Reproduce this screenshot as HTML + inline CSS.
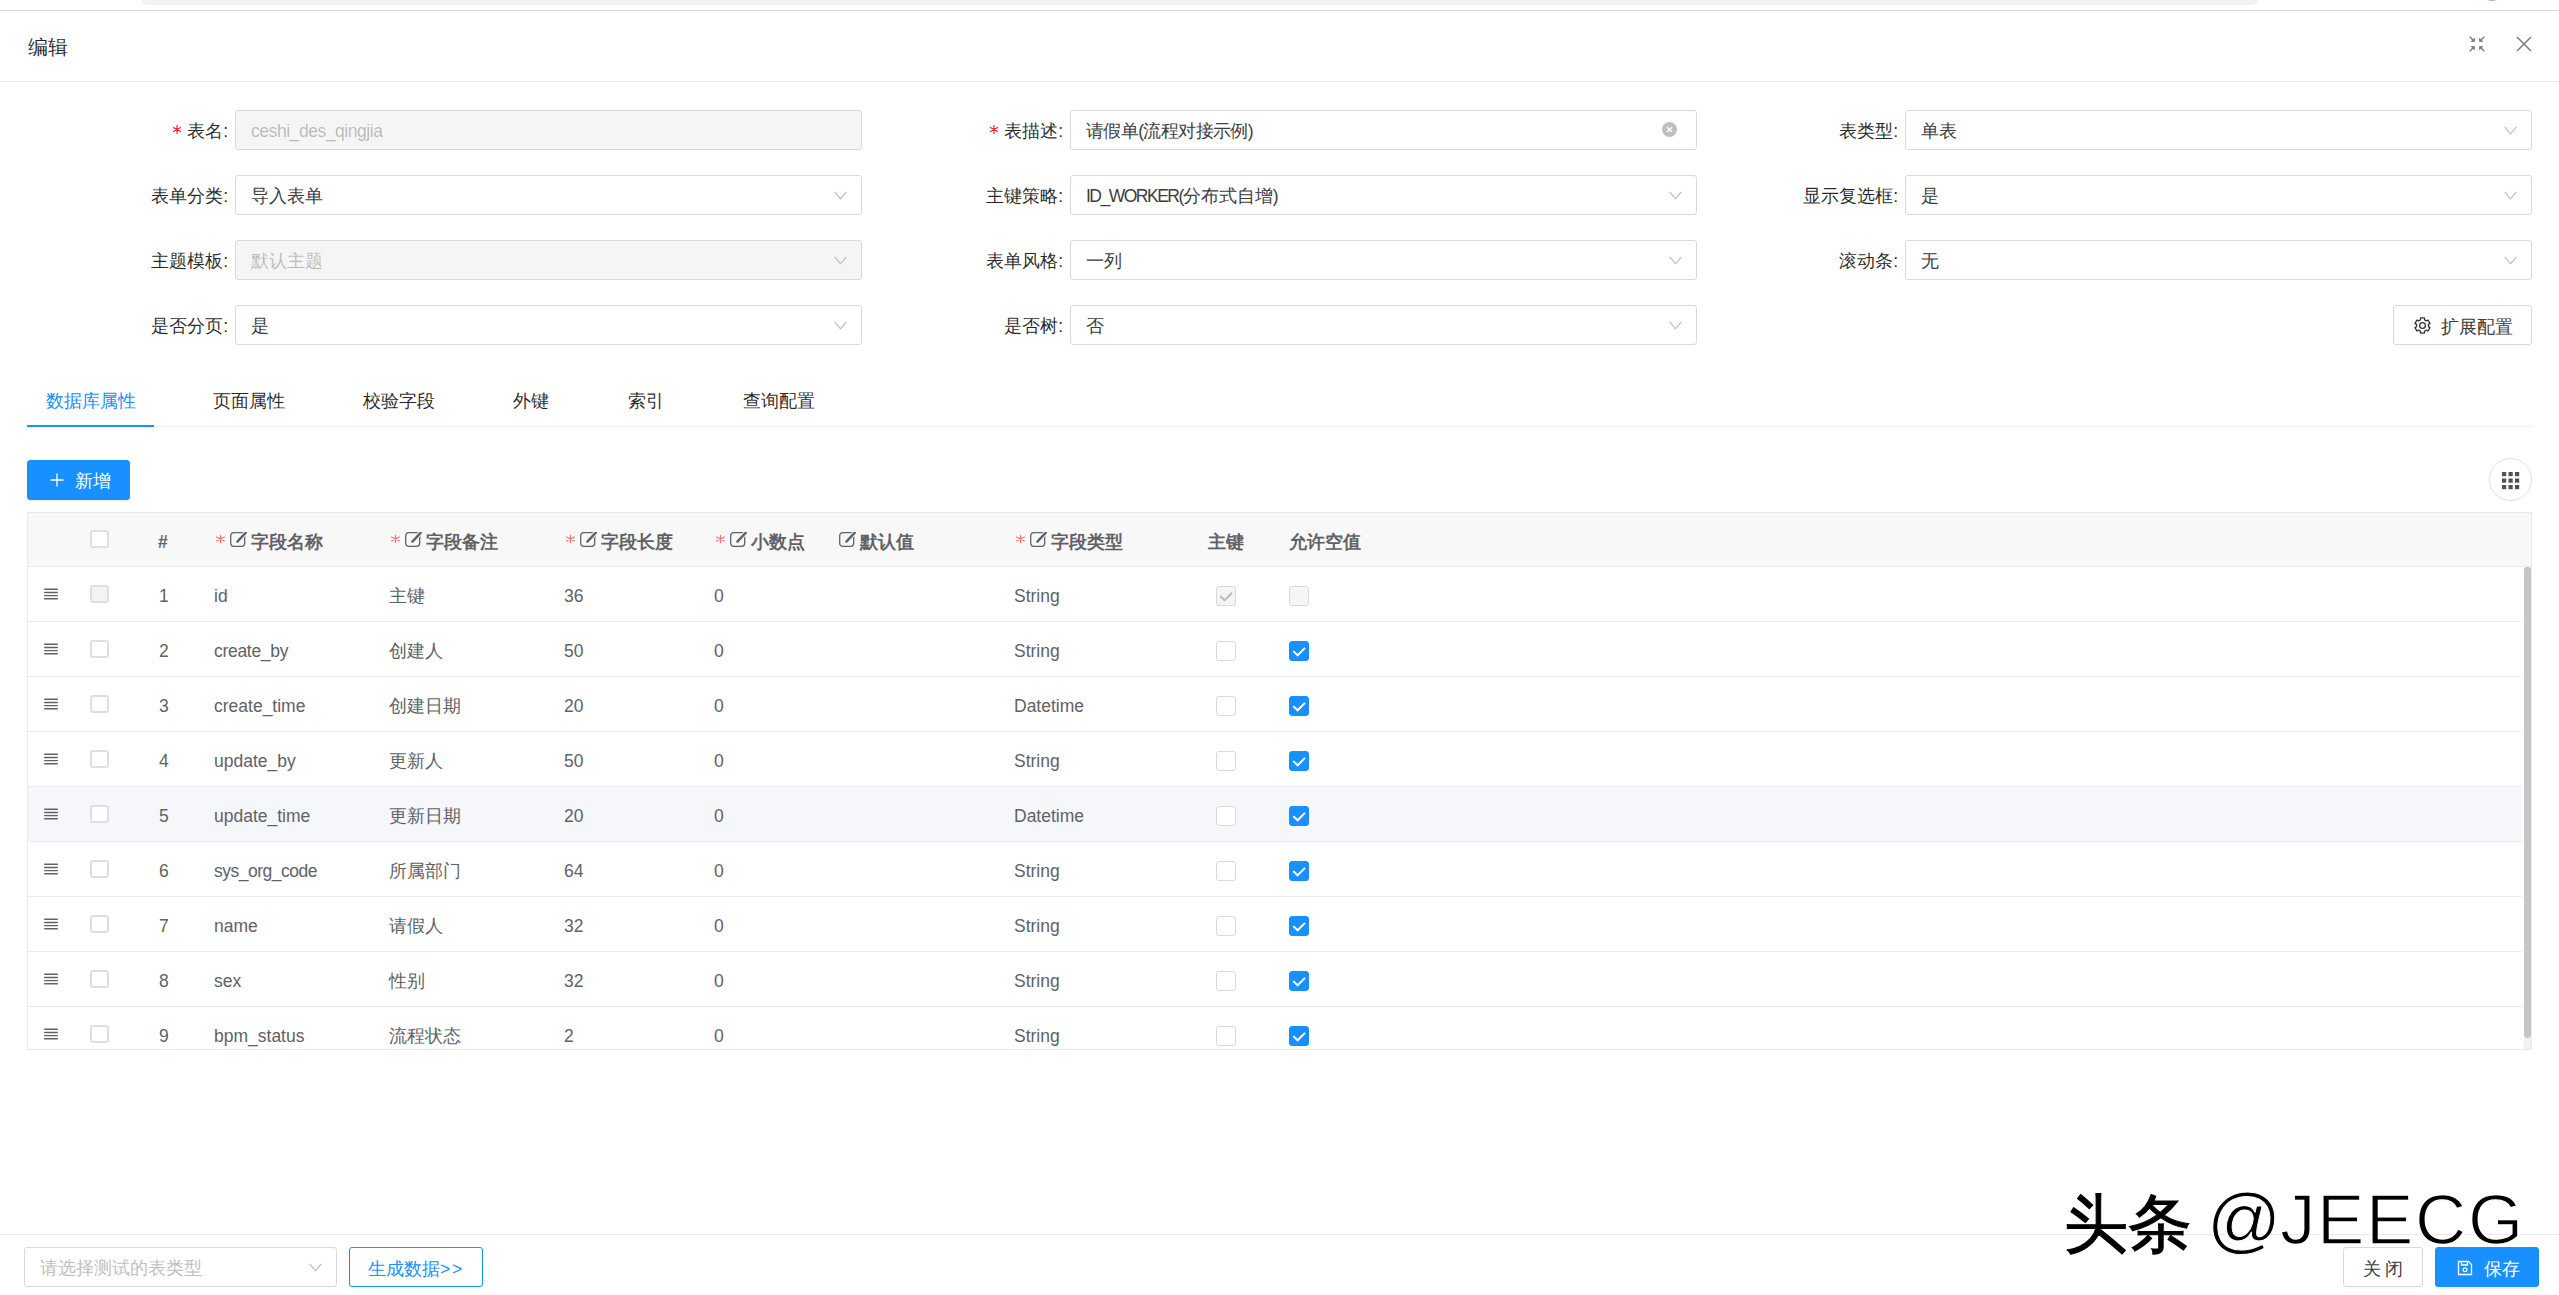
<!DOCTYPE html><html><head><meta charset="utf-8"><style>
*{box-sizing:border-box;margin:0;padding:0}
html,body{width:2559px;height:1295px;overflow:hidden;background:#fff}
body{position:relative;font-family:"Liberation Sans",sans-serif;font-size:17.5px;color:rgba(0,0,0,.65)}
.a{position:absolute}
.topbar{left:140px;top:-10px;width:2119px;height:15px;background:#f0f2f5;border-radius:10px}
.dot{left:2487px;top:-4px;width:10px;height:5px;background:#9bbcd8;border-radius:50%}
.mline{left:0;top:10px;width:2559px;height:1px;background:#dcdde0}
.title{left:28px;top:33px;font-size:20px;line-height:28px;color:rgba(0,0,0,.85)}
.hline{left:0;top:81px;width:2559px;height:1px;background:#ebebeb}
.lbl{position:absolute;text-align:right;line-height:40px;height:40px;padding-top:1px;color:rgba(0,0,0,.85);white-space:nowrap}
.req{display:inline-block;width:8px;height:9px;margin-right:6px;vertical-align:3px}
.inp{position:absolute;width:627px;height:40px;border:1px solid #d9d9d9;border-radius:3px;background:#fff;line-height:38px;padding-left:15px;padding-top:1px;color:#3d3d3d;white-space:nowrap}
.inp.dis{background:#f5f5f5;color:rgba(0,0,0,.25)}
.arr{position:absolute;right:14px;top:15px;width:13px;height:9px}
.btn{position:absolute;height:40px;border:1px solid #d9d9d9;border-radius:3px;background:#fff;line-height:38px;padding-top:1.5px;text-align:center;color:#3a3a3a;white-space:nowrap;box-shadow:0 2px 0 rgba(0,0,0,.015)}
.btn.pri{background:#1890ff;border-color:#1890ff;color:#fff;box-shadow:0 2px 0 rgba(0,0,0,.045)}
.tab{position:absolute;top:387px;line-height:28px;color:rgba(0,0,0,.85);white-space:nowrap}
.tab.act{color:#1890ff}
.tbl{left:27px;top:512px;width:2505px;height:538px;border:1px solid #e8eaec}
.thead{left:28px;top:513px;width:2503px;height:54px;background:#f8f8f9;border-bottom:1px solid #e8eaec}
.row{position:absolute;left:28px;width:2494px;height:55px;border-bottom:1px solid #e8eaec}
.row.hov{background:#f5f7fa}
.c{position:absolute;top:1.5px;line-height:54px;white-space:nowrap;color:#606266}
.hc{position:absolute;top:0;padding-top:2.5px;line-height:53px;white-space:nowrap;color:#606266;font-weight:bold}
.vck{position:absolute;width:19px;height:18px;border:2px solid #dcdfe6;border-radius:3px;background:#fff}
.vck.dis{background:#f3f3f3}
.ack{position:absolute;width:20px;height:20px;border:1px solid #d9d9d9;border-radius:3px;background:#fff}
.ack.dis{background:#f5f5f5}
.ack.on{background:#1890ff;border-color:#1890ff}
.drag{position:absolute;left:16px;top:21px;width:14px;height:12px}
.sb{left:2524px;top:567px;width:7px;height:471px;background:#c4c5c8;border-radius:3px}
.sbc{left:2524px;top:1038px;width:7px;height:11px;background:#f1f1f1}
.fline{left:0;top:1234px;width:2559px;height:1px;background:#ebebeb}
.wm{font-family:"Liberation Sans",sans-serif;white-space:nowrap}
</style></head><body>
<div class="a topbar"></div><div class="a dot"></div><div class="a mline"></div>
<div class="a title">编辑</div><div class="a hline"></div>
<svg class="a" style="left:2469px;top:36px" width="16" height="16" viewBox="0 0 16 16"><g stroke="#7d7d7d" stroke-width="1.4" fill="#7d7d7d" stroke-linejoin="round"><path d="M0.7 0.7L4 4M15.3 0.7L12 4M0.7 15.3L4 12M15.3 15.3L12 12" fill="none"/><path d="M5.5 5.5H2.2L5.5 2.2Z M10.5 5.5H13.8L10.5 2.2Z M5.5 10.5H2.2L5.5 13.8Z M10.5 10.5H13.8L10.5 13.8Z" stroke-width="0.8"/></g></svg>
<svg class="a" style="left:2516px;top:36px" width="16" height="16" viewBox="0 0 16 16"><path d="M1 1L15 15M15 1L1 15" stroke="#7d7d7d" stroke-width="1.5" fill="none"/></svg>
<div class="lbl" style="right:2331px;top:110px"><svg class="req" viewBox="0 0 8 9"><path d="M4 0.3V8.7M0.4 2.4L7.6 6.6M0.4 6.6L7.6 2.4" stroke="#f5222d" stroke-width="1.15" stroke-linecap="round"/></svg>表名:</div>
<div class="inp dis" style="left:235px;top:110px"><span style="letter-spacing:-0.45px">ceshi_des_qingjia</span></div>
<div class="lbl" style="right:1496px;top:110px"><svg class="req" viewBox="0 0 8 9"><path d="M4 0.3V8.7M0.4 2.4L7.6 6.6M0.4 6.6L7.6 2.4" stroke="#f5222d" stroke-width="1.15" stroke-linecap="round"/></svg>表描述:</div>
<div class="inp" style="left:1070px;top:110px"><span style="letter-spacing:-0.6px">请假单(流程对接示例)</span><svg class="a" style="right:19px;top:11px" width="15" height="15" viewBox="0 0 14 14"><circle cx="7" cy="7" r="7" fill="#bfbfbf"/><path d="M4.6 4.6L9.4 9.4M9.4 4.6L4.6 9.4" stroke="#fff" stroke-width="1.3"/></svg></div>
<div class="lbl" style="right:661px;top:110px">表类型:</div>
<div class="inp" style="left:1905px;top:110px">单表<svg class="arr" viewBox="0 0 13 9"><path d="M0.7 0.8 L6.5 7.8 L12.3 0.8" fill="none" stroke="#bfbfbf" stroke-width="1.3"/></svg></div>
<div class="lbl" style="right:2331px;top:175px">表单分类:</div>
<div class="inp" style="left:235px;top:175px">导入表单<svg class="arr" viewBox="0 0 13 9"><path d="M0.7 0.8 L6.5 7.8 L12.3 0.8" fill="none" stroke="#bfbfbf" stroke-width="1.3"/></svg></div>
<div class="lbl" style="right:1496px;top:175px">主键策略:</div>
<div class="inp" style="left:1070px;top:175px"><span style="letter-spacing:-1.5px">ID_WORKER(</span>分布式自增)<svg class="arr" viewBox="0 0 13 9"><path d="M0.7 0.8 L6.5 7.8 L12.3 0.8" fill="none" stroke="#bfbfbf" stroke-width="1.3"/></svg></div>
<div class="lbl" style="right:661px;top:175px">显示复选框:</div>
<div class="inp" style="left:1905px;top:175px">是<svg class="arr" viewBox="0 0 13 9"><path d="M0.7 0.8 L6.5 7.8 L12.3 0.8" fill="none" stroke="#bfbfbf" stroke-width="1.3"/></svg></div>
<div class="lbl" style="right:2331px;top:240px">主题模板:</div>
<div class="inp dis" style="left:235px;top:240px">默认主题<svg class="arr" viewBox="0 0 13 9"><path d="M0.7 0.8 L6.5 7.8 L12.3 0.8" fill="none" stroke="#bfbfbf" stroke-width="1.3"/></svg></div>
<div class="lbl" style="right:1496px;top:240px">表单风格:</div>
<div class="inp" style="left:1070px;top:240px">一列<svg class="arr" viewBox="0 0 13 9"><path d="M0.7 0.8 L6.5 7.8 L12.3 0.8" fill="none" stroke="#bfbfbf" stroke-width="1.3"/></svg></div>
<div class="lbl" style="right:661px;top:240px">滚动条:</div>
<div class="inp" style="left:1905px;top:240px">无<svg class="arr" viewBox="0 0 13 9"><path d="M0.7 0.8 L6.5 7.8 L12.3 0.8" fill="none" stroke="#bfbfbf" stroke-width="1.3"/></svg></div>
<div class="lbl" style="right:2331px;top:305px">是否分页:</div>
<div class="inp" style="left:235px;top:305px">是<svg class="arr" viewBox="0 0 13 9"><path d="M0.7 0.8 L6.5 7.8 L12.3 0.8" fill="none" stroke="#bfbfbf" stroke-width="1.3"/></svg></div>
<div class="lbl" style="right:1496px;top:305px">是否树:</div>
<div class="inp" style="left:1070px;top:305px">否<svg class="arr" viewBox="0 0 13 9"><path d="M0.7 0.8 L6.5 7.8 L12.3 0.8" fill="none" stroke="#bfbfbf" stroke-width="1.3"/></svg></div>
<div class="btn" style="left:2393px;top:305px;width:139px"><svg style="position:absolute;left:20px;top:11px" width="17" height="17" viewBox="0 0 17 17"><path d="M11.16 3.12 L10.50 2.84 L10.47 0.95 L6.53 0.95 L6.50 2.84 L5.18 3.51 L4.60 3.94 L2.95 3.02 L0.98 6.43 L2.60 7.40 L2.51 8.88 L2.60 9.60 L0.98 10.57 L2.95 13.98 L4.60 13.06 L5.84 13.88 L6.50 14.16 L6.53 16.05 L10.47 16.05 L10.50 14.16 L11.82 13.49 L12.40 13.06 L14.05 13.98 L16.02 10.57 L14.40 9.60 L14.49 8.12 L14.40 7.40 L16.02 6.43 L14.05 3.02 L12.40 3.94Z" fill="none" stroke="#333" stroke-width="1.3" stroke-linejoin="round"/><circle cx="8.5" cy="8.5" r="2.9" fill="none" stroke="#333" stroke-width="1.3"/></svg><span style="position:absolute;left:47px;top:1.5px">扩展配置</span></div>
<div class="tab act" style="left:46px">数据库属性</div>
<div class="tab" style="left:213px">页面属性</div>
<div class="tab" style="left:363px">校验字段</div>
<div class="tab" style="left:513px">外键</div>
<div class="tab" style="left:628px">索引</div>
<div class="tab" style="left:743px">查询配置</div>
<div class="a" style="left:27px;top:426px;width:2505px;height:1px;background:#efefef"></div>
<div class="a" style="left:27px;top:425px;width:127px;height:2px;background:#1890ff"></div>
<div class="btn pri" style="left:27px;top:460px;width:103px"><svg style="position:absolute;left:22px;top:12px" width="14" height="14" viewBox="0 0 14 14"><path d="M7 0.5V13.5M0.5 7H13.5" stroke="#fff" stroke-width="1.3"/></svg><span style="position:absolute;left:47px;top:1px">新增</span></div>
<div class="a" style="left:2489px;top:458px;width:43px;height:43px;border:1px solid #dcdee2;border-radius:50%;background:#fff"></div>
<svg class="a" style="left:2502px;top:472px" width="18" height="18" viewBox="0 0 18 18"><rect x="0.0" y="0.0" width="4.2" height="4.2" fill="#515151"/><rect x="6.5" y="0.0" width="4.2" height="4.2" fill="#515151"/><rect x="13.0" y="0.0" width="4.2" height="4.2" fill="#515151"/><rect x="0.0" y="6.5" width="4.2" height="4.2" fill="#515151"/><rect x="6.5" y="6.5" width="4.2" height="4.2" fill="#515151"/><rect x="13.0" y="6.5" width="4.2" height="4.2" fill="#515151"/><rect x="0.0" y="13.0" width="4.2" height="4.2" fill="#515151"/><rect x="6.5" y="13.0" width="4.2" height="4.2" fill="#515151"/><rect x="13.0" y="13.0" width="4.2" height="4.2" fill="#515151"/></svg>
<div class="a tbl"></div><div class="a thead"></div>
<div class="vck" style="left:90px;top:530px"></div>
<div class="hc" style="left:158px;top:513px">#</div>
<div class="hc" style="left:216px;top:513px"><svg style="display:inline-block;vertical-align:5px;margin-right:5px" width="9" height="8" viewBox="0 0 9 8"><path d="M4.5 0.2V7.8M0.6 2.1L8.4 5.9M0.6 5.9L8.4 2.1" stroke="#f56c6c" stroke-width="1.15" stroke-linecap="round"/></svg><svg style="display:inline-block;vertical-align:0.5px;margin-right:4px" width="17" height="15" viewBox="0 0 17 15"><rect x="0.7" y="0.7" width="14" height="13.6" rx="3" fill="none" stroke="#606266" stroke-width="1.3"/><path d="M7.2 9.6L16 0.4" stroke="#f8f8f9" stroke-width="4.2"/><path d="M7.4 9.6L15.8 0.6" stroke="#606266" stroke-width="2.4" stroke-linecap="round"/></svg>字段名称</div>
<div class="hc" style="left:391px;top:513px"><svg style="display:inline-block;vertical-align:5px;margin-right:5px" width="9" height="8" viewBox="0 0 9 8"><path d="M4.5 0.2V7.8M0.6 2.1L8.4 5.9M0.6 5.9L8.4 2.1" stroke="#f56c6c" stroke-width="1.15" stroke-linecap="round"/></svg><svg style="display:inline-block;vertical-align:0.5px;margin-right:4px" width="17" height="15" viewBox="0 0 17 15"><rect x="0.7" y="0.7" width="14" height="13.6" rx="3" fill="none" stroke="#606266" stroke-width="1.3"/><path d="M7.2 9.6L16 0.4" stroke="#f8f8f9" stroke-width="4.2"/><path d="M7.4 9.6L15.8 0.6" stroke="#606266" stroke-width="2.4" stroke-linecap="round"/></svg>字段备注</div>
<div class="hc" style="left:566px;top:513px"><svg style="display:inline-block;vertical-align:5px;margin-right:5px" width="9" height="8" viewBox="0 0 9 8"><path d="M4.5 0.2V7.8M0.6 2.1L8.4 5.9M0.6 5.9L8.4 2.1" stroke="#f56c6c" stroke-width="1.15" stroke-linecap="round"/></svg><svg style="display:inline-block;vertical-align:0.5px;margin-right:4px" width="17" height="15" viewBox="0 0 17 15"><rect x="0.7" y="0.7" width="14" height="13.6" rx="3" fill="none" stroke="#606266" stroke-width="1.3"/><path d="M7.2 9.6L16 0.4" stroke="#f8f8f9" stroke-width="4.2"/><path d="M7.4 9.6L15.8 0.6" stroke="#606266" stroke-width="2.4" stroke-linecap="round"/></svg>字段长度</div>
<div class="hc" style="left:716px;top:513px"><svg style="display:inline-block;vertical-align:5px;margin-right:5px" width="9" height="8" viewBox="0 0 9 8"><path d="M4.5 0.2V7.8M0.6 2.1L8.4 5.9M0.6 5.9L8.4 2.1" stroke="#f56c6c" stroke-width="1.15" stroke-linecap="round"/></svg><svg style="display:inline-block;vertical-align:0.5px;margin-right:4px" width="17" height="15" viewBox="0 0 17 15"><rect x="0.7" y="0.7" width="14" height="13.6" rx="3" fill="none" stroke="#606266" stroke-width="1.3"/><path d="M7.2 9.6L16 0.4" stroke="#f8f8f9" stroke-width="4.2"/><path d="M7.4 9.6L15.8 0.6" stroke="#606266" stroke-width="2.4" stroke-linecap="round"/></svg>小数点</div>
<div class="hc" style="left:839px;top:513px"><svg style="display:inline-block;vertical-align:0.5px;margin-right:4px" width="17" height="15" viewBox="0 0 17 15"><rect x="0.7" y="0.7" width="14" height="13.6" rx="3" fill="none" stroke="#606266" stroke-width="1.3"/><path d="M7.2 9.6L16 0.4" stroke="#f8f8f9" stroke-width="4.2"/><path d="M7.4 9.6L15.8 0.6" stroke="#606266" stroke-width="2.4" stroke-linecap="round"/></svg>默认值</div>
<div class="hc" style="left:1016px;top:513px"><svg style="display:inline-block;vertical-align:5px;margin-right:5px" width="9" height="8" viewBox="0 0 9 8"><path d="M4.5 0.2V7.8M0.6 2.1L8.4 5.9M0.6 5.9L8.4 2.1" stroke="#f56c6c" stroke-width="1.15" stroke-linecap="round"/></svg><svg style="display:inline-block;vertical-align:0.5px;margin-right:4px" width="17" height="15" viewBox="0 0 17 15"><rect x="0.7" y="0.7" width="14" height="13.6" rx="3" fill="none" stroke="#606266" stroke-width="1.3"/><path d="M7.2 9.6L16 0.4" stroke="#f8f8f9" stroke-width="4.2"/><path d="M7.4 9.6L15.8 0.6" stroke="#606266" stroke-width="2.4" stroke-linecap="round"/></svg>字段类型</div>
<div class="hc" style="left:1208px;top:513px">主键</div>
<div class="hc" style="left:1289px;top:513px">允许空值</div>
<div class="row" style="top:567px;height:55px;">
<svg class="drag" viewBox="0 0 14 12"><path d="M0.7 1.2H13.3M0.7 4.4H13.3M0.7 7.6H13.3M0.7 10.8H13.3" stroke="#606266" stroke-width="1.45" stroke-linecap="round"/></svg>
<div class="vck dis" style="left:62px;top:18px"></div>
<div class="c" style="left:131px">1</div>
<div class="c" style="left:186px;letter-spacing:0">id</div>
<div class="c" style="left:361px">主键</div>
<div class="c" style="left:536px">36</div>
<div class="c" style="left:686px">0</div>
<div class="c" style="left:986px">String</div>
<div class="ack dis" style="left:1188px;top:19px"><svg width="20" height="20" viewBox="0 0 20 20" style="position:absolute;left:-1px;top:-1px"><path d="M4.3 10.1L8.6 14.3L16 6.9" fill="none" stroke="#bfbfbf" stroke-width="2.2"/></svg></div>
<div class="ack dis" style="left:1261px;top:19px"></div>
</div>
<div class="row" style="top:622px;height:55px;">
<svg class="drag" viewBox="0 0 14 12"><path d="M0.7 1.2H13.3M0.7 4.4H13.3M0.7 7.6H13.3M0.7 10.8H13.3" stroke="#606266" stroke-width="1.45" stroke-linecap="round"/></svg>
<div class="vck" style="left:62px;top:18px"></div>
<div class="c" style="left:131px">2</div>
<div class="c" style="left:186px;letter-spacing:-0.3px">create_by</div>
<div class="c" style="left:361px">创建人</div>
<div class="c" style="left:536px">50</div>
<div class="c" style="left:686px">0</div>
<div class="c" style="left:986px">String</div>
<div class="ack" style="left:1188px;top:19px"></div>
<div class="ack on" style="left:1261px;top:19px"><svg width="20" height="20" viewBox="0 0 20 20" style="position:absolute;left:-1px;top:-1px"><path d="M4.3 10.1L8.6 14.3L16 6.9" fill="none" stroke="#fff" stroke-width="2"/></svg></div>
</div>
<div class="row" style="top:677px;height:55px;">
<svg class="drag" viewBox="0 0 14 12"><path d="M0.7 1.2H13.3M0.7 4.4H13.3M0.7 7.6H13.3M0.7 10.8H13.3" stroke="#606266" stroke-width="1.45" stroke-linecap="round"/></svg>
<div class="vck" style="left:62px;top:18px"></div>
<div class="c" style="left:131px">3</div>
<div class="c" style="left:186px;letter-spacing:0">create_time</div>
<div class="c" style="left:361px">创建日期</div>
<div class="c" style="left:536px">20</div>
<div class="c" style="left:686px">0</div>
<div class="c" style="left:986px">Datetime</div>
<div class="ack" style="left:1188px;top:19px"></div>
<div class="ack on" style="left:1261px;top:19px"><svg width="20" height="20" viewBox="0 0 20 20" style="position:absolute;left:-1px;top:-1px"><path d="M4.3 10.1L8.6 14.3L16 6.9" fill="none" stroke="#fff" stroke-width="2"/></svg></div>
</div>
<div class="row" style="top:732px;height:55px;">
<svg class="drag" viewBox="0 0 14 12"><path d="M0.7 1.2H13.3M0.7 4.4H13.3M0.7 7.6H13.3M0.7 10.8H13.3" stroke="#606266" stroke-width="1.45" stroke-linecap="round"/></svg>
<div class="vck" style="left:62px;top:18px"></div>
<div class="c" style="left:131px">4</div>
<div class="c" style="left:186px;letter-spacing:0">update_by</div>
<div class="c" style="left:361px">更新人</div>
<div class="c" style="left:536px">50</div>
<div class="c" style="left:686px">0</div>
<div class="c" style="left:986px">String</div>
<div class="ack" style="left:1188px;top:19px"></div>
<div class="ack on" style="left:1261px;top:19px"><svg width="20" height="20" viewBox="0 0 20 20" style="position:absolute;left:-1px;top:-1px"><path d="M4.3 10.1L8.6 14.3L16 6.9" fill="none" stroke="#fff" stroke-width="2"/></svg></div>
</div>
<div class="row hov" style="top:787px;height:55px;">
<svg class="drag" viewBox="0 0 14 12"><path d="M0.7 1.2H13.3M0.7 4.4H13.3M0.7 7.6H13.3M0.7 10.8H13.3" stroke="#606266" stroke-width="1.45" stroke-linecap="round"/></svg>
<div class="vck" style="left:62px;top:18px"></div>
<div class="c" style="left:131px">5</div>
<div class="c" style="left:186px;letter-spacing:0">update_time</div>
<div class="c" style="left:361px">更新日期</div>
<div class="c" style="left:536px">20</div>
<div class="c" style="left:686px">0</div>
<div class="c" style="left:986px">Datetime</div>
<div class="ack" style="left:1188px;top:19px"></div>
<div class="ack on" style="left:1261px;top:19px"><svg width="20" height="20" viewBox="0 0 20 20" style="position:absolute;left:-1px;top:-1px"><path d="M4.3 10.1L8.6 14.3L16 6.9" fill="none" stroke="#fff" stroke-width="2"/></svg></div>
</div>
<div class="row" style="top:842px;height:55px;">
<svg class="drag" viewBox="0 0 14 12"><path d="M0.7 1.2H13.3M0.7 4.4H13.3M0.7 7.6H13.3M0.7 10.8H13.3" stroke="#606266" stroke-width="1.45" stroke-linecap="round"/></svg>
<div class="vck" style="left:62px;top:18px"></div>
<div class="c" style="left:131px">6</div>
<div class="c" style="left:186px;letter-spacing:-0.5px">sys_org_code</div>
<div class="c" style="left:361px">所属部门</div>
<div class="c" style="left:536px">64</div>
<div class="c" style="left:686px">0</div>
<div class="c" style="left:986px">String</div>
<div class="ack" style="left:1188px;top:19px"></div>
<div class="ack on" style="left:1261px;top:19px"><svg width="20" height="20" viewBox="0 0 20 20" style="position:absolute;left:-1px;top:-1px"><path d="M4.3 10.1L8.6 14.3L16 6.9" fill="none" stroke="#fff" stroke-width="2"/></svg></div>
</div>
<div class="row" style="top:897px;height:55px;">
<svg class="drag" viewBox="0 0 14 12"><path d="M0.7 1.2H13.3M0.7 4.4H13.3M0.7 7.6H13.3M0.7 10.8H13.3" stroke="#606266" stroke-width="1.45" stroke-linecap="round"/></svg>
<div class="vck" style="left:62px;top:18px"></div>
<div class="c" style="left:131px">7</div>
<div class="c" style="left:186px;letter-spacing:0">name</div>
<div class="c" style="left:361px">请假人</div>
<div class="c" style="left:536px">32</div>
<div class="c" style="left:686px">0</div>
<div class="c" style="left:986px">String</div>
<div class="ack" style="left:1188px;top:19px"></div>
<div class="ack on" style="left:1261px;top:19px"><svg width="20" height="20" viewBox="0 0 20 20" style="position:absolute;left:-1px;top:-1px"><path d="M4.3 10.1L8.6 14.3L16 6.9" fill="none" stroke="#fff" stroke-width="2"/></svg></div>
</div>
<div class="row" style="top:952px;height:55px;">
<svg class="drag" viewBox="0 0 14 12"><path d="M0.7 1.2H13.3M0.7 4.4H13.3M0.7 7.6H13.3M0.7 10.8H13.3" stroke="#606266" stroke-width="1.45" stroke-linecap="round"/></svg>
<div class="vck" style="left:62px;top:18px"></div>
<div class="c" style="left:131px">8</div>
<div class="c" style="left:186px;letter-spacing:0">sex</div>
<div class="c" style="left:361px">性别</div>
<div class="c" style="left:536px">32</div>
<div class="c" style="left:686px">0</div>
<div class="c" style="left:986px">String</div>
<div class="ack" style="left:1188px;top:19px"></div>
<div class="ack on" style="left:1261px;top:19px"><svg width="20" height="20" viewBox="0 0 20 20" style="position:absolute;left:-1px;top:-1px"><path d="M4.3 10.1L8.6 14.3L16 6.9" fill="none" stroke="#fff" stroke-width="2"/></svg></div>
</div>
<div class="row" style="top:1007px;height:42px;border-bottom:none;">
<svg class="drag" viewBox="0 0 14 12"><path d="M0.7 1.2H13.3M0.7 4.4H13.3M0.7 7.6H13.3M0.7 10.8H13.3" stroke="#606266" stroke-width="1.45" stroke-linecap="round"/></svg>
<div class="vck" style="left:62px;top:18px"></div>
<div class="c" style="left:131px">9</div>
<div class="c" style="left:186px;letter-spacing:0">bpm_status</div>
<div class="c" style="left:361px">流程状态</div>
<div class="c" style="left:536px">2</div>
<div class="c" style="left:686px">0</div>
<div class="c" style="left:986px">String</div>
<div class="ack" style="left:1188px;top:19px"></div>
<div class="ack on" style="left:1261px;top:19px"><svg width="20" height="20" viewBox="0 0 20 20" style="position:absolute;left:-1px;top:-1px"><path d="M4.3 10.1L8.6 14.3L16 6.9" fill="none" stroke="#fff" stroke-width="2"/></svg></div>
</div>
<div class="a sb"></div><div class="a sbc"></div>
<div class="a fline"></div>
<div class="inp" style="left:24px;top:1247px;width:313px;color:#bfbfbf">请选择测试的表类型<svg class="arr" viewBox="0 0 13 9"><path d="M0.7 0.8 L6.5 7.8 L12.3 0.8" fill="none" stroke="#bfbfbf" stroke-width="1.3"/></svg></div>
<div class="btn" style="left:349px;top:1247px;width:134px;border-color:#1890ff;color:#1890ff;text-align:left;padding-left:18px">生成数据<span style="letter-spacing:1.7px">&gt;</span>&gt;</div>
<div class="btn" style="left:2343px;top:1247px;width:80px">关 闭</div>
<div class="btn pri" style="left:2435px;top:1247px;width:104px"><svg style="position:absolute;left:21px;top:12px" width="16" height="16" viewBox="0 0 16 16"><path d="M1.5 1.5H11.5L14.5 4.5V14.5H1.5Z" fill="none" stroke="#fff" stroke-width="1.3"/><path d="M4.5 1.5V5H10.5V1.5" fill="none" stroke="#fff" stroke-width="1.3"/><circle cx="8" cy="9.8" r="1.9" fill="none" stroke="#fff" stroke-width="1.3"/></svg><span style="position:absolute;left:48px;top:1.5px">保存</span></div>
<div class="a wm" style="left:2064px;top:1184px;font-size:64px;line-height:80px;color:#000;-webkit-text-stroke:1px #000;">头条</div>
<div class="a wm" style="left:2207px;top:1179px;font-size:73px;line-height:80px;color:#000;-webkit-text-stroke:1px #fff;">@</div>
<div class="a wm" style="left:2280px;top:1180px;font-size:71px;line-height:80px;letter-spacing:1.6px;color:#000;-webkit-text-stroke:1.4px #fff;">JEECG</div>
</body></html>
